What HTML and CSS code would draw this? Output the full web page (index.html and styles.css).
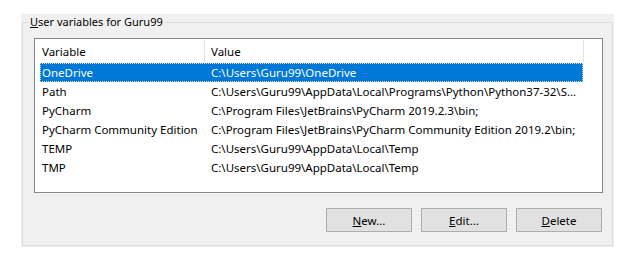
FILE: index.html
```html
<!DOCTYPE html>
<html>
	<head>
		<meta charset="utf-8">
		<title>Environment Variables</title>
		<link rel="stylesheet" href="styles.css">
	</head>
	<body>
		<div class="panel">
			<fieldset class="group">
				<legend><u>U</u>ser variables for Guru99</legend>
				<div class="list">
					<div class="head">
						<div class="col col1">Variable</div>
						<div class="col col2">Value</div>
					</div>
					<ul class="rows">
						<li class="sel"><span>OneDrive</span><span>C:\Users\Guru99\OneDrive</span></li>
						<li><span>Path</span><span>C:\Users\Guru99\AppData\Local\Programs\Python\Python37-32\S...</span></li>
						<li><span>PyCharm</span><span>C:\Program Files\JetBrains\PyCharm 2019.2.3\bin;</span></li>
						<li><span>PyCharm Community Edition</span><span>C:\Program Files\JetBrains\PyCharm Community Edition 2019.2\bin;</span></li>
						<li><span>TEMP</span><span>C:\Users\Guru99\AppData\Local\Temp</span></li>
						<li><span>TMP</span><span>C:\Users\Guru99\AppData\Local\Temp</span></li>
					</ul>
				</div>
				<div class="btns">
					<button><u>N</u>ew...</button>
					<button><u>E</u>dit...</button>
					<button><u>D</u>elete</button>
				</div>
			</fieldset>
		</div>
	</body>
</html>
```
FILE: styles.css
```css
*{
	margin: 0;
	padding: 0;
	box-sizing: border-box;
}
body{
	background: #fff;
	font-family: "Segoe UI", "Noto Sans", sans-serif;
	font-size: 11.5px;
	color: #000;
}
li{
	list-style: none;
}
.panel{
	margin: 14px 0 0 21px;
	width: 593px;
	height: 233px;
	padding: 0 1px 1px 1px;
	background: #f0f0f0;
}
.group{
	height: 100%;
	border: 1px solid #dcdcdc;
	padding: 0 9px 0 11px;
}
.group legend{
	margin-left: -6px;
	padding: 0 2px;
	line-height: 16px;
	font-size: 11px;
}
.list{
	margin-top: 8px;
	height: 155px;
	background: #fff;
	border: 1px solid #828790;
}
.head{
	display: flex;
	height: 24px;
	padding-top: 1px;
	line-height: 23px;
}
.col{
	border-right: 1px solid #e5e5e5;
}
.col1{
	width: 170px;
	padding-left: 7px;
}
.col2{
	width: 379px;
	padding-left: 6px;
}
.rows{
	margin-left: 5px;
	width: 543px;
}
.rows li{
	display: grid;
	grid-template-columns: 169px 1fr;
	height: 19px;
	line-height: 18px;
	white-space: nowrap;
	border: 1px solid transparent;
}
.rows li span{
	padding-left: 1px;
	overflow: hidden;
}
.rows li.sel{
	background: #0078d7;
	color: #fff;
	border: 1px dotted #e8d7a6;
}
.btns{
	display: flex;
	justify-content: flex-end;
	gap: 9px;
	margin-top: 15px;
	padding-right: 1px;
}
.btns button{
	width: 86px;
	height: 24px;
	background: #e1e1e1;
	border: 1px solid #adadad;
	font: inherit;
	color: #000;
}
```
